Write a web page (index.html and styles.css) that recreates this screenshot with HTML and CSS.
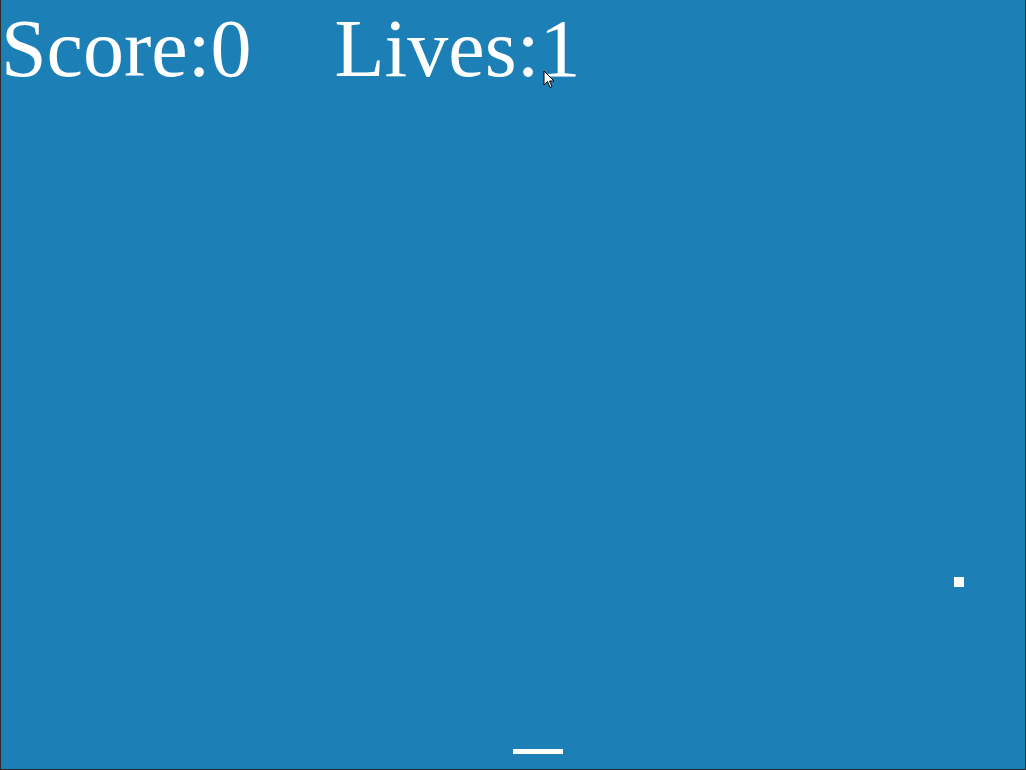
FILE: index.html
```html
<!DOCTYPE html>
<html>
<head>
<meta charset="utf-8">
<link rel="stylesheet" href="styles.css">
</head>
<body>
<div class="game">
  <div class="hud">
    <span class="stat">Score:0</span>
    <span class="stat">Lives:1</span>
  </div>
  <div class="ball"></div>
  <div class="paddle"></div>
  <svg class="cursor" width="14" height="20" viewBox="0 0 14 20">
    <path d="M1 1 L1 15 L4.5 11.5 L7 17.5 L9 16.7 L6.6 11 L11 11 Z" fill="#fff" stroke="#000" stroke-width="1" stroke-linejoin="round"/>
  </svg>
</div>
</body>
</html>
```
FILE: styles.css
```css
html, body {
  margin: 0;
  padding: 0;
  background: #2b2b2b;
}
body {
  width: 1026px;
  height: 770px;
  overflow: hidden;
}
.game {
  position: relative;
  margin-left: 1px;
  width: 1024px;
  height: 769px;
  background: #1c80b7;
}
.hud {
  display: flex;
  gap: 83px;
  padding-top: 8px;
  font-family: "Liberation Serif", "Times New Roman", serif;
  font-size: 82px;
  line-height: 82px;
  color: #fff;
}
.ball {
  position: absolute;
  left: 953px;
  top: 577px;
  width: 10px;
  height: 10px;
  background: #fff;
}
.paddle {
  position: absolute;
  left: 512px;
  top: 749px;
  width: 50px;
  height: 5px;
  background: #fff;
}
.cursor {
  position: absolute;
  left: 542px;
  top: 70px;
}
```
